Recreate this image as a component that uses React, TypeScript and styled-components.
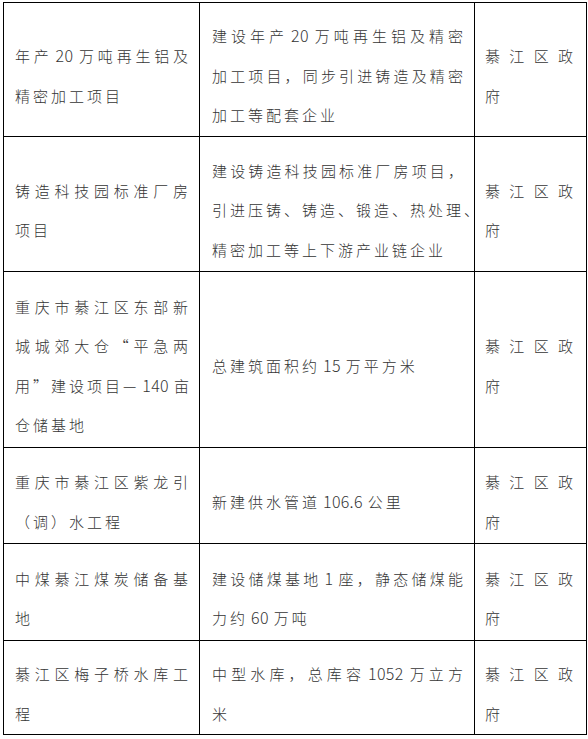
import React from 'react';
import styled, { createGlobalStyle } from 'styled-components';

const Global = createGlobalStyle`
  html, body { margin: 0; padding: 0; background: #fff; }
  body { font-family: "Noto Sans CJK SC", "Noto Sans", sans-serif; }
`;

const Page = styled.div`
  padding: 2px 0 0 3px;
`;

const Table = styled.table`
  border-collapse: collapse;
  table-layout: fixed;
  width: 583px;
  color: #353535;
  font-size: 15px;
  font-weight: 300;
`;

const Row = styled.tr<{ $h: number }>`
  height: ${(p) => p.$h}px;
`;

const Cell = styled.td<{ $w: number; $pl: number; $pr: number }>`
  width: ${(p) => p.$w}px;
  border: 1px solid #000;
  vertical-align: middle;
  padding: 12px ${(p) => p.$pr}px 0 ${(p) => p.$pl}px;
  box-sizing: border-box;
`;

const Line = styled.span<{ $full?: boolean }>`
  display: block;
  line-height: 39.5px;
  letter-spacing: 3px;
  white-space: nowrap;
  text-align: ${(p) => (p.$full ? 'justify' : 'left')};
  text-align-last: ${(p) => (p.$full ? 'justify' : 'left')};
`;

const Num = styled.span`
  display: inline-block;
  letter-spacing: 0.3px;
  margin: 0 5px 0 3px;
  font-weight: 300;
  font-size: 16px;
`;

type RowData = { name: string[]; content: string[]; h: number };

const rows: RowData[] = [
  {
    name: ['年产 20 万吨再生铝及', '精密加工项目'],
    content: ['建设年产 20 万吨再生铝及精密', '加工项目，同步引进铸造及精密', '加工等配套企业'],
    h: 134,
  },
  {
    name: ['铸造科技园标准厂房', '项目'],
    content: ['建设铸造科技园标准厂房项目，', '引进压铸、铸造、锻造、热处理、', '精密加工等上下游产业链企业'],
    h: 135,
  },
  {
    name: ['重庆市綦江区东部新', '城城郊大仓“平急两', '用”建设项目—140 亩', '仓储基地'],
    content: ['总建筑面积约 15 万平方米'],
    h: 176,
  },
  {
    name: ['重庆市綦江区紫龙引', '（调）水工程'],
    content: ['新建供水管道 106.6 公里'],
    h: 96,
  },
  {
    name: ['中煤綦江煤炭储备基', '地'],
    content: ['建设储煤基地 1 座，静态储煤能', '力约 60 万吨'],
    h: 97,
  },
  {
    name: ['綦江区梅子桥水库工', '程'],
    content: ['中型水库，总库容 1052 万立方', '米'],
    h: 94,
  },
];

const renderText = (s: string) => {
  const parts = s.split(/\s*(\d[\d.]*)\s*/);
  return parts.map((p, i) => (i % 2 === 1 ? <Num key={i}>{p}</Num> : p));
};

const Lines: React.FC<{ lines: string[] }> = ({ lines }) => (
  <>
    {lines.map((l, i) => (
      <Line key={i} $full={i < lines.length - 1}>
        {renderText(l)}
      </Line>
    ))}
  </>
);

export default function App() {
  return (
    <>
      <Global />
      <Page>
        <Table>
          <tbody>
            {rows.map((r, i) => (
              <Row key={i} $h={r.h}>
                <Cell $w={196} $pl={11} $pr={8}>
                  <Lines lines={r.name} />
                </Cell>
                <Cell $w={275} $pl={12} $pr={8}>
                  <Lines lines={r.content} />
                </Cell>
                <Cell $w={112} $pl={10} $pr={10}>
                  <Lines lines={['綦江区政', '府']} />
                </Cell>
              </Row>
            ))}
          </tbody>
        </Table>
      </Page>
    </>
  );
}
